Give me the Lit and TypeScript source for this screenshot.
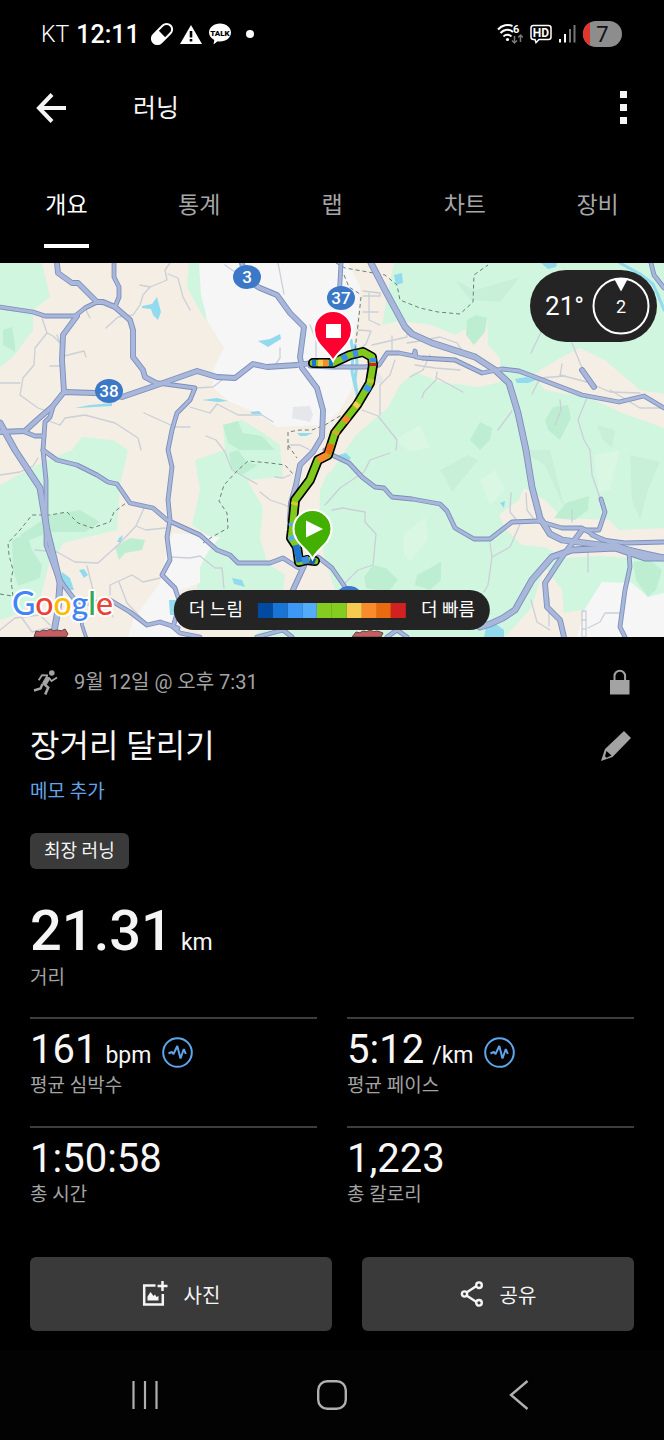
import { LitElement, html, svg, css } from "lit";
import { customElement, property, state } from "lit/decorators.js";

type Shape = [kind: string, points: string];
type Stroke = [width: number, points: string];

const AREAS: Shape[] = [
  ["green", "0,263 42,263 50,297 33,310 33,330 13,357 0,367"],
  ["green", "189,263 187,287 205,320 210,300 201,263"],
  ["white", "199,263 201,295 208,322 224,348 213,370 213,388 230,402 257,413 277,427 325,425 340,410 352,390 354,340 362,290 348,263"],
  ["green", "0,485 43,462 72,450 82,437 113,440 128,450 120,485 117,530 63,543 60,550 50,560 40,600 10,617 0,620"],
  ["green", "195,460 225,450 223,425 242,420 262,432 280,445 283,477 247,480 263,507 260,537 267,563 285,575 283,590 197,590 200,565 215,540 192,525 200,490"],
  ["green", "393,263 664,263 664,637 330,637 250,637 335,590 325,560 319,530 320,490 335,455 350,430 378,417 366,400 380,372 372,340 382,325"],
  ["white", "173,533 220,537 207,553 200,567 200,583 180,590 180,637 128,637 133,620 160,583 167,550"],
  ["beige", "362,263 394,263 381,325 400,321 432,325 455,335 487,318 488,345 500,358 500,382 480,387 440,382 415,372 400,385 388,408 378,416 356,435 332,470 300,500 352,390"],
  ["beige", "533,375 560,358 580,348 605,360 640,390 664,394 664,428 620,412 590,398 545,390"],
  ["beige", "499,515 519,500 524,488 545,500 562,518 609,520 619,530 664,528 664,560 600,556 565,558 545,547 522,545 505,528"],
  ["beige", "545,567 562,590 564,613 582,610 582,637 505,637 532,607 539,583"],
  ["white", "602,582 632,583 648,597 664,593 664,637 577,637 584,610"],
  ["wood", "3,330 12,327 15,345 15,352 3,345"],
  ["wood", "223,425 238,421 243,433 262,436 275,450 240,450 228,443"],
  ["wood", "467,320 476,315 487,318 485,332 474,345 466,335"],
  ["wood", "115,547 130,538 145,540 142,550 125,553 119,560"],
  ["wood", "12,540 27,534 32,550 42,565 40,578 18,586 13,570"],
  ["wood", "20,535 50,515 80,510 100,522 85,532 50,532 30,540"],
  ["wood", "229,453 238,450 247,462 258,465 242,475 231,468"],
  ["wood", "364,577 373,565 386,568 398,580 388,592 366,588"],
  ["wood", "417,575 432,567 441,562 441,580 430,590 415,585"],
  ["wood", "554,518 566,503 589,496 588,510 575,520"],
  ["wood", "633,562 650,560 662,570 656,590 648,597 636,580"],
  ["wood", "545,420 553,407 568,405 571,418 560,440 548,430"],
  ["wood", "470,440 480,422 492,428 490,440 480,450"],
  ["shade", "440,470 468,455 478,460 452,492 446,480"],
  ["shade", "455,280 475,290 520,277 500,302 470,300"],
  ["shade", "597,425 615,430 612,448 603,440"],
  ["shade", "630,455 660,462 648,490 640,520 632,500"],
  ["shade", "565,510 550,450 520,450 545,465"],
  ["pale", "403,535 425,517 428,540 410,562 404,555"],
  ["pale", "594,455 620,450 610,490 599,492"],
  ["pale", "480,480 495,470 505,490 490,505"],
  ["pale", "395,440 420,425 430,447 410,452"],
  ["grey", "293,407 310,406 313,415 310,422 292,418"],
  ["grey", "378,372 383,378 382,384 375,382"],
  ["water", "142,306 152,304 157,297 161,312 158,320 153,315 151,309 142,308"],
  ["water", "258,341 270,339 280,334 281,339 268,347"],
  ["water", "75,408 90,405 112,403 112,406 78,408"],
  ["water", "202,400 217,398 228,401 218,402"],
  ["water", "250,412 259,411 262,414 252,414"],
  ["water", "297,433 313,433 306,436 300,436"],
  ["water", "394,275 402,273 403,283 396,285"],
  ["water", "515,379 526,377 536,380 528,383 517,383"],
  ["water", "62,572 70,578 74,590 68,590 60,582"],
  ["water", "79,570 84,569 88,575 84,578"],
  ["water", "169,600 176,600 176,615 170,615"],
  ["water", "232,578 242,580 245,587 234,584"],
  ["water", "338,455 346,453 351,458 346,463 340,461"],
  ["water", "500,503 505,501 504,508"],
  ["water", "486,627 496,624 504,630 504,637 484,637"],
  ["water", "541,263 557,263 556,267 548,269"],
  ["water", "119,538 123,535 121,542 117,542"],
];

const STREAMS = [
  "620,263 640,274 653,284 658,295 664,310",
  "351,340 353,352 352,372 356,390",
  "355,345 357,362 355,380 358,400",
];

const MINOR = [
  "42,318 47,333 35,348 34,365 23,378 20,395 38,408 50,412",
  "47,333 53,336 60,343 57,335",
  "64,356 84,351 86,357",
  "50,366 62,366",
  "0,383 20,383",
  "85,308 90,318",
  "106,328 118,317 133,315 140,305 143,295 150,287 167,280 165,270 170,263",
  "168,274 178,278 183,297 190,310",
  "140,285 150,287",
  "225,265 242,277",
  "278,263 284,294",
  "280,348 280,358 275,365",
  "144,413 175,427 190,427",
  "46,420 60,425 65,418 85,415 115,423 138,438 141,450",
  "190,407 210,413 217,404 238,415 262,415 273,422",
  "195,388 213,387 222,380",
  "206,436 216,440 225,452 232,470 257,484",
  "0,475 20,472 33,466 38,458",
  "144,508 136,526 118,545 98,563 75,562 57,552 35,550",
  "136,526 146,530 165,528",
  "170,557 190,558 200,556 215,568 222,568 224,588",
  "87,566 93,590 92,603",
  "110,595 110,585 132,575 143,582 160,578",
  "119,582 127,603 145,622",
  "260,492 270,500 285,505 291,508",
  "310,325 316,340 316,360",
  "332,510 343,508 365,512 365,522 376,534 373,565 358,570 345,583",
  "325,505 340,488 352,480 364,472 370,460 390,453",
  "363,291 380,293 380,296 363,296",
  "369,293 369,320 380,325",
  "358,330 371,331 366,344 358,350",
  "363,312 378,312",
  "372,345 407,337 407,325",
  "392,336 392,350",
  "407,343 420,341 440,337 457,343 463,352",
  "430,355 423,370 410,377",
  "437,372 436,380 424,392 422,398",
  "437,378 463,392",
  "395,360 390,375 380,385 380,415",
  "362,410 378,416 397,440 396,450",
  "415,365 435,368 460,370",
  "531,353 542,330",
  "572,343 580,363 588,380",
  "560,375 587,382 610,392 640,393",
  "562,364 560,376",
  "532,394 540,378 565,376",
  "610,390 640,408 664,408",
  "588,395 578,420 584,440 590,450",
  "560,400 561,410 555,425",
  "512,411 498,430",
  "590,450 592,475 600,498",
  "526,493 527,510 533,518",
  "511,493 510,512 520,524 510,547 492,557 488,585 484,592",
  "490,543 492,557",
  "572,510 572,522",
  "588,550 588,572",
  "531,600 537,622 550,630",
  "549,598 549,626",
  "582,611 586,611 586,637 582,637 582,611",
  "582,620 586,620",
  "582,629 586,629",
  "588,628 600,622 605,613 620,613",
  "0,630 15,618 40,615 50,625",
  "22,618 32,632 48,628",
  "90,603 110,609 113,617",
  "290,475 283,478 275,477",
  "290,445 300,445 310,450",
];

const DASHED = [
  "13,596 11,580 13,570 9,555 8,543 20,530 32,515 50,515 67,512 78,523 92,528 110,522 114,512 130,500",
  "0,594 12,596",
  "203,543 212,537 228,528 227,513 219,501 224,485 238,470 248,461 270,463 285,465 293,474",
  "336,263 345,268 368,272 385,275 397,285 400,300 420,308 438,312 460,314 473,302 474,275 488,265",
  "344,275 349,287 360,294",
  "361,297 358,325 355,350",
  "288,450 288,432 300,430 312,430 325,425 340,416 352,413",
  "288,445 297,458",
];

const ROADS: Stroke[] = [
  [4, "57,263 58,273 72,283 78,283 97,302 103,302 115,307 130,320 133,330 133,357 143,370 145,377 158,384"],
  [3, "114,263 114,277 119,287 119,297 115,307"],
  [3, "0,307 33,312 45,316 75,316 85,308 97,302"],
  [4, "77,316 63,335 62,360 64,392"],
  [4, "0,432 25,431 37,420 52,407 64,392 95,393 122,397 163,383 197,371 217,377 235,378 253,364 267,367 297,365 312,363"],
  [3, "158,383 195,388 190,400 177,413 172,430 168,450 172,467 168,500 170,520 167,537 170,560 162,575 175,588 180,603 173,627 180,633 200,637"],
  [4, "242,263 246,280 260,288 277,295 290,313 304,327 300,357 302,368 317,388 323,410 322,437 313,452 300,465 296,485 291,503 290,520"],
  [5, "0,423 15,450 40,488 47,530 60,583 58,610 53,637"],
  [3, "53,407 50,417 45,422 43,450 46,480 46,505 46,545 57,575 65,587 75,600 85,604 110,600 130,612 147,625 160,622 178,628"],
  [3, "25,432 35,436 44,436"],
  [3, "43,450 57,460 77,465 97,475 108,482 117,484 130,503 153,508 167,520 200,535 217,550 230,555 238,563 270,563 283,558 297,567 302,569"],
  [4, "304,566 292,592"],
  [3, "318,557 332,568 345,587"],
  [3, "325,450 332,455 349,463 362,477 375,487 384,488 392,497 412,499 440,504 447,511 455,528 474,539 490,539 512,522 538,521"],
  [3, "310,366 332,367 365,367 379,365 387,353 399,353 414,356 415,351 416,357 422,358 455,360 482,373 502,369 519,371 582,395 619,402 644,396 664,408"],
  [5, "371,263 385,290 405,327 412,334 432,343 475,357 495,370 509,383 518,413 526,450 532,487 540,518 550,534 562,540 609,546 664,558"],
  [4, "582,370 594,387"],
  [3, "538,521 562,528 582,528 602,540 625,543 664,542"],
  [3, "601,499 605,512 599,530 585,530"],
  [5, "480,627 490,624 503,618 515,610 532,580 552,557 572,550 615,548 645,558 664,558"],
  [3, "592,535 625,548 655,556"],
  [4, "582,530 562,557 545,583 547,607 560,620 564,637"],
  [3, "629,553 630,567 625,590 620,627 625,637"],
  [3, "651,263 654,275 664,288"],
  [3, "257,637 283,630 292,637"],
  [3, "387,637 397,630 407,637"],
  [3, "341,263 339,300"],
  [2, "81,612 82,625 86,637"],
];

const ROUTE =
  "313,363 333,363 350,355 363,352 372,357 373,365 370,383 357,405 335,433 328,455 318,460 310,480 295,500 292,530 291,538 297,547 299,562 307,560 315,561";

const PACE: [color: string, points: string][] = [
  ["#1a74d4", "312,363 316,363"],
  ["#f7cb50", "318,363 323,363"],
  ["#f98b2c", "323,363 328,363"],
  ["#1a74d4", "329,363 333,363"],
  ["#3c8ee8", "342,359 347,356"],
  ["#3c8ee8", "353,354 358,353"],
  ["#3c8ee8", "373,358 373,362"],
  ["#d32020", "373,363 373,366"],
  ["#b9c92c", "371,379 370,383"],
  ["#3c98f4", "369,386 366,391"],
  ["#f7cb50", "358,403 355,407"],
  ["#f98b2c", "348,417 344,422"],
  ["#d9a92c", "337,431 335,434"],
  ["#ea6a10", "331,444 328,454"],
  ["#f98b2c", "328,455 318,460"],
  ["#d9c92c", "295,502 294,505"],
  ["#54abfc", "292,523 292,526"],
  ["#54abfc", "291,536 293,540"],
  ["#1a74d4", "296,545 299,558 300,562"],
  ["#3c8ee8", "302,561 309,559"],
  ["#1a5aa8", "310,560 315,562"],
];

const LEGEND = [
  "#014aa0", "#1a74d4", "#3c98f4", "#54abfc", "#84cc20",
  "#84cc20", "#f7cb50", "#f98b2c", "#ea6a10", "#d32020",
];

@customElement("route-map")
class RouteMap extends LitElement {
  static styles = css`
    :host { display: block; position: relative; height: 374px; overflow: hidden; }
    .canvas { display: block; width: 100%; height: 100%; }
    .green { fill: #d1f6e0; }
    .wood { fill: #beeed1; }
    .shade { fill: #c8f0d8; }
    .pale { fill: #daf7e3; }
    .white { fill: #f6f6f7; }
    .beige { fill: #f4eee4; }
    .grey { fill: #e6e7ea; }
    .water { fill: #92dbee; }
    .line { fill: none; stroke-linejoin: round; stroke-linecap: round; }
    .stream { stroke: #92dbee; stroke-width: 3; }
    .minor { stroke: #cbcfd8; stroke-width: 1.3; }
    .dashed { stroke: #6d7f78; stroke-width: 1; stroke-dasharray: 4 3; stroke-linecap: butt; }
    .casing { stroke: #7c8fbd; }
    .road { stroke: #a8b7da; }
    .butt { stroke-linecap: butt; }
    .shield { font: 500 17px Roboto, sans-serif; fill: #fff; text-anchor: middle; }
    .logo {
      font: 500 32px Lato, sans-serif; stroke: #fff; stroke-width: 4;
      stroke-linejoin: round; paint-order: stroke;
    }
    .b { fill: #4285f4; }
    .r { fill: #ea4335; }
    .y { fill: #fbbc05; }
    .g { fill: #34a853; }
    .weather {
      position: absolute; top: 7px; right: 7px; height: 72px; box-sizing: border-box;
      padding: 0 7px 0 15px; display: flex; align-items: center; gap: 8px;
      border-radius: 36px; background: #242424; color: #fff; font-size: 26px;
    }
    .dial { display: block; width: 58px; height: 58px; }
    .dial-text { font: 400 18px Roboto, sans-serif; fill: #fff; text-anchor: middle; }
    .legend {
      position: absolute; left: 50%; bottom: 7px; transform: translateX(-50%);
      height: 40px; box-sizing: border-box; padding: 0 15px; display: flex;
      align-items: center; gap: 15px; border-radius: 20px; background: #242424;
      color: #fff; font-size: 18px; line-height: 40px; white-space: nowrap;
    }
    .scale { display: flex; width: 148px; height: 15px; }
    .step { flex: 1; }
  `;

  render() {
    return html`
      <svg class="canvas" viewBox="0 263 664 374" preserveAspectRatio="xMidYMid slice" role="img" aria-label="지도">
        <rect class="beige" y="263" width="664" height="374"></rect>
        ${AREAS.map(([kind, points]) => svg`<polygon class=${kind} points=${points}></polygon>`)}
        ${STREAMS.map((p) => svg`<polyline class="line stream" points=${p}></polyline>`)}
        ${MINOR.map((p) => svg`<polyline class="line minor" points=${p}></polyline>`)}
        ${DASHED.map((p) => svg`<polyline class="line dashed" points=${p}></polyline>`)}
        ${ROADS.map(([w, p]) => svg`<polyline class="line casing" stroke-width=${w + 1.8} points=${p}></polyline>`)}
        ${ROADS.map(([w, p]) => svg`<polyline class="line road" stroke-width=${w} points=${p}></polyline>`)}
        <ellipse cx="247" cy="277" rx="14" ry="12" fill="#3b78c8"></ellipse>
        <text class="shield" x="247" y="283">3</text>
        <ellipse cx="341" cy="298" rx="14" ry="12" fill="#3b78c8"></ellipse>
        <text class="shield" x="341" y="304">37</text>
        <ellipse cx="109" cy="391" rx="14" ry="12" fill="#3b78c8"></ellipse>
        <text class="shield" x="109" y="397">38</text>
        <ellipse cx="349" cy="597" rx="13" ry="11" fill="#3b78c8"></ellipse>
        <path d="M34 637l2-6q4 2 7-1 4 2 7-1 4 3 7 1 5 2 8-1l3 5-2 3z" fill="#c65d60" stroke="#5d4444"></path>
        <path d="M352 637l4-5q4 2 7-1 4 2 7-1 4 3 7 1 4 1 6 2l-2 4z" fill="#c65d60" stroke="#5d4444"></path>
        <polyline class="line" stroke="#000" stroke-width="10" points=${ROUTE}></polyline>
        <polyline class="line" stroke="#82c91e" stroke-width="6.6" points=${ROUTE}></polyline>
        ${PACE.map(([c, p]) => svg`<polyline class="line butt" stroke=${c} stroke-width="6.6" points=${p}></polyline>`)}
        <path d="M333 361C328 351 314 344 314 330a19 19 0 0 1 38 0C352 344 338 351 333 361z" fill="#ff0030" stroke="#fff" stroke-width="2"></path>
        <rect x="326" y="324" width="15" height="14" fill="#fff"></rect>
        <path d="M312.500 559C308 549 293.500 543 293.500 529a19 19 0 0 1 38 0C331.500 543 317 549 312.500 559z" fill="#43b000" stroke="#fff" stroke-width="2"></path>
        <path d="M306 520.500v17l17-8.500z" fill="#fff"></path>
        <text class="logo" x="12" y="615"><tspan class="b">G</tspan><tspan class="r">o</tspan><tspan class="y">o</tspan><tspan class="b">g</tspan><tspan class="g">l</tspan><tspan class="r">e</tspan></text>
      </svg>
      <div class="weather">
        <span>21°</span>
        <svg class="dial" viewBox="0 0 58 58">
          <circle cx="29" cy="29" r="27.500" fill="none" stroke="#fff" stroke-width="2"></circle>
          <path d="M22 1.500h14l-7 13z" fill="#fff"></path>
          <text class="dial-text" x="29" y="36">2</text>
        </svg>
      </div>
      <div class="legend">
        <span>더 느림</span>
        <div class="scale">${LEGEND.map((c) => html`<div class="step" style="background:${c}"></div>`)}</div>
        <span>더 빠름</span>
      </div>
    `;
  }
}

@customElement("metric-cell")
class MetricCell extends LitElement {
  @property() value = "";
  @property() unit = "";
  @property() label = "";
  @property({ type: Boolean }) pulse = false;

  static styles = css`
    :host { display: block; border-top: 2px solid #3d3d3d; padding-top: 8px; }
    .row { display: flex; align-items: baseline; height: 46px; line-height: 46px; color: #f7f7f7; }
    .value { font-size: 40px; }
    .unit { font-size: 23px; margin-left: 8px; }
    .more {
      align-self: flex-end; margin: 0 0 5px 11px; padding: 0; border: 0;
      background: none; width: 31px; height: 31px;
    }
    .icon { display: block; width: 31px; height: 31px; }
    .label { font-size: 19px; line-height: 26px; color: #a3a3a3; }
  `;

  render() {
    return html`
      <div class="row">
        <span class="value">${this.value}</span>
        ${this.unit ? html`<span class="unit">${this.unit}</span>` : ""}
        ${this.pulse
          ? html`<button class="more" aria-label=${this.label}>
              <svg class="icon" viewBox="0 0 31 31" fill="none" stroke="#5fa5ec">
                <circle cx="15.500" cy="15.500" r="14.300" stroke-width="2"></circle>
                <path d="M6.500 16.500l3.200-1.500 1.800 2L15.300 9l3.200 12.500L21.800 12l2 5" stroke-width="2" stroke-linejoin="bevel"></path>
              </svg>
            </button>`
          : ""}
      </div>
      <div class="label">${this.label}</div>
    `;
  }
}

@customElement("app-root")
class AppRoot extends LitElement {
  @state() private tab = "개요";

  static styles = css`
    :host {
      display: flex; flex-direction: column; min-height: 100vh; background: #000; color: #f5f5f5;
      font-family: Roboto, "Noto Sans CJK KR", sans-serif;
    }
    button { font-family: inherit; color: inherit; background: none; border: 0; padding: 0; }
    svg { display: block; }
    .status {
      display: flex; align-items: center; justify-content: space-between;
      height: 68px; padding: 0 42px 0 41px; color: #fff;
    }
    .side { display: flex; align-items: center; gap: 7px; }
    .carrier { font-size: 23px; font-weight: 300; }
    .clock { font-size: 25px; font-weight: 500; margin-right: 4px; }
    .tiny { font: 900 8px Roboto, sans-serif; text-anchor: middle; }
    .hd { font: 700 12px Roboto, sans-serif; text-anchor: middle; fill: #fff; }
    .six { font: 700 11px Roboto, sans-serif; fill: #fff; }
    .charge { font: 400 22px Roboto, sans-serif; text-anchor: middle; fill: #111; }
    .bar { display: flex; align-items: center; height: 80px; padding: 0 36px; }
    .heading { flex: 1; margin: 0 0 0 67px; padding-top: 2px; font-size: 25px; font-weight: 400; line-height: 36px; }
    .tabs { display: grid; grid-template-columns: repeat(5, 1fr); height: 115px; }
    .tab {
      display: flex; flex-direction: column; align-items: center; padding-top: 40px;
      font-size: 23px; line-height: 36px; color: #a6a6a6;
    }
    .tab::after { content: ""; width: 45px; height: 4px; margin-top: 20px; }
    .tab.on { color: #fff; }
    .tab.on::after { background: #fff; }
    .details { padding: 32px 30px 0; }
    .meta { display: flex; align-items: center; height: 26px; color: #a3a3a3; }
    .when { flex: 1; margin-left: 14px; font-size: 20px; line-height: 26px; }
    .named { display: flex; align-items: center; justify-content: space-between; margin-top: 28px; }
    .title { margin: 0; font-size: 32px; font-weight: 400; line-height: 46px; color: #f7f7f7; }
    .memo { display: block; margin-top: 10px; font-size: 19px; line-height: 26px; color: #62a5ea; text-decoration: none; }
    .chip {
      width: fit-content; margin-top: 28px; padding: 0 14px; border-radius: 6px;
      background: #3a3a3a; font-size: 18px; line-height: 36px;
    }
    .distance { margin-top: 32px; height: 60px; line-height: 60px; }
    .big { font-size: 56px; font-weight: 500; }
    .unit { font-size: 23px; margin-left: 8px; }
    .label { margin-top: 4px; font-size: 19px; line-height: 26px; color: #a3a3a3; }
    .metrics { display: grid; grid-template-columns: 1fr 1fr; gap: 27px 30px; margin-top: 26px; }
    .actions { display: grid; grid-template-columns: 50% 1fr; gap: 30px; margin-top: 49px; }
    .action {
      display: flex; align-items: center; justify-content: center; gap: 16px; height: 74px;
      border-radius: 6px; background: #3a3a3a; font-size: 20px;
    }
    .system {
      display: grid; grid-template-columns: repeat(3, 1fr); place-items: center;
      height: 90px; margin-top: auto; padding: 0 52px; background: #030303;
    }
  `;

  render() {
    return html`
      <div class="status">
        <div class="side">
          <span class="carrier">KT</span>
          <span class="clock">12:11</span>
          <svg width="22" height="24" viewBox="0 0 22 24">
            <g transform="rotate(-45 11 12)">
              <rect x="-1" y="6.500" width="24" height="11" rx="5.500" fill="none" stroke="#fff" stroke-width="2"></rect>
              <path d="M11 6.500H4.500a5.500 5.500 0 0 0 0 11H11z" fill="#fff"></path>
            </g>
          </svg>
          <svg width="22" height="22" viewBox="0 0 22 22">
            <path d="M11 2L22 21H0z" fill="#fff"></path>
            <path d="M9.700 8h2.600v6.500H9.700zM9.700 16h2.600v2.600H9.700z" fill="#000"></path>
          </svg>
          <svg width="22" height="24" viewBox="0 0 22 24">
            <path d="M11 1.500c6.200 0 11 4 11 9s-4.800 9-11 9q-1.200 0-2.400-.2L4.500 22.500l.8-4.500C2 16.400 0 13.700 0 10.500c0-5 4.800-9 11-9z" fill="#fff"></path>
            <text class="tiny" x="11" y="13.500">TALK</text>
          </svg>
          <svg width="24" height="8" viewBox="0 0 24 8"><circle cx="12" cy="4" r="4" fill="#fff"></circle></svg>
        </div>
        <div class="side">
          <svg width="26" height="24" viewBox="0 0 26 24" fill="none">
            <g stroke="#fff" stroke-width="2">
              <path d="M1 7.500C5 3 11 2 15.500 4"></path>
              <path d="M3.500 11c3.500-4 9-4.500 12.500-1"></path>
              <path d="M6.500 14.500c2-2.500 6-2.500 8 0"></path>
            </g>
            <circle cx="10.500" cy="17.500" r="1.600" fill="#fff"></circle>
            <text class="six" x="16" y="11">6</text>
            <path d="M17.500 14v7m-2.500-2.500 2.500 2.500 2.500-2.500M23.500 20v-7M21.200 15.500l2.300-2.500 2.300 2.500" stroke="#777" stroke-width="1.500"></path>
          </svg>
          <svg width="22" height="20" viewBox="0 0 22 20">
            <path d="M3.500 1.500h15q2.500 0 2.500 2.500v9q0 2.500-2.500 2.500H9L6 18.500l-1-3H3.500Q1 15.500 1 13V4q0-2.500 2.500-2.500z" fill="none" stroke="#fff" stroke-width="1.500"></path>
            <text class="hd" x="11" y="13">HD</text>
          </svg>
          <svg width="17" height="18" viewBox="0 0 17 18">
            <rect y="14" width="2" height="3.500" fill="#fff"></rect>
            <rect x="5" y="9" width="2" height="8.500" fill="#fff"></rect>
            <rect x="10" y="4" width="2" height="13.500" fill="#777"></rect>
            <rect x="14.500" y="0" width="2" height="17.500" fill="#777"></rect>
          </svg>
          <svg width="39" height="26" viewBox="0 0 39 26">
            <rect width="39" height="26" rx="13" fill="#8d8d8d"></rect>
            <path d="M7 1.500a13 13 0 0 0 0 23z" fill="#e3352c"></path>
            <text class="charge" x="19.500" y="21">7</text>
          </svg>
        </div>
      </div>

      <header class="bar">
        <button aria-label="뒤로">
          <svg width="30" height="30" viewBox="0 0 30 30" fill="none" stroke="#f5f5f5" stroke-width="4">
            <path d="M30 15H4M16 1.500L3 15l13 13.500"></path>
          </svg>
        </button>
        <h1 class="heading">러닝</h1>
        <button aria-label="메뉴">
          <svg width="8" height="34" viewBox="0 0 8 34" fill="#f5f5f5">
            <path d="M0 0h7v7H0zM0 13h7v7H0zM0 26h7v7H0z"></path>
          </svg>
        </button>
      </header>

      <div class="tabs" role="tablist">
        ${["개요", "통계", "랩", "차트", "장비"].map(
          (name) => html`<button
            class=${this.tab === name ? "tab on" : "tab"}
            role="tab"
            aria-selected=${this.tab === name ? "true" : "false"}
            @click=${() => (this.tab = name)}
          >${name}</button>`
        )}
      </div>

      <route-map></route-map>

      <main class="details">
        <div class="meta">
          <svg width="30" height="26" viewBox="0 0 30 26" fill="none" stroke="#a3a3a3">
            <circle cx="21.800" cy="4" r="2.800" fill="#a3a3a3" stroke="none"></circle>
            <path d="M18.500 8l-4.500 7.500" stroke-width="5"></path>
            <path d="M18 6.500l-6-.3-3.300 5" stroke-width="1.800"></path>
            <path d="M18.500 8.500l3 3.500 5.500-3.500" stroke-width="1.800"></path>
            <path d="M13.500 14.500l4.700 4-3 7" stroke-width="2.600"></path>
            <path d="M12.500 15l-2 4.500-6.500 2" stroke-width="2.400"></path>
          </svg>
          <span class="when">9월 12일 @ 오후 7:31</span>
          <svg width="24" height="26" viewBox="0 0 24 26">
            <path d="M0 11h19.500v14.500H0z" fill="#a3a3a3"></path>
            <path d="M4.500 12V7a5.300 5.300 0 0 1 10.600 0v5" fill="none" stroke="#a3a3a3" stroke-width="2"></path>
          </svg>
        </div>
        <div class="named">
          <h2 class="title">장거리 달리기</h2>
          <button aria-label="편집">
            <svg width="33" height="30" viewBox="0 0 33 30">
              <path d="M23 0l7 7L11.500 26 0 30l4-12z" fill="#a3a3a3"></path>
              <path d="M5.500 20l5 4.500-5 2.200-1.500-1.500z" fill="#000"></path>
            </svg>
          </button>
        </div>
        <a class="memo" href="#memo">메모 추가</a>
        <div class="chip">최장 러닝</div>
        <div class="distance"><span class="big">21.31</span><span class="unit">km</span></div>
        <div class="label">거리</div>

        <div class="metrics">
          <metric-cell value="161" unit="bpm" label="평균 심박수" pulse></metric-cell>
          <metric-cell value="5:12" unit="/km" label="평균 페이스" pulse></metric-cell>
          <metric-cell value="1:50:58" label="총 시간"></metric-cell>
          <metric-cell value="1,223" label="총 칼로리"></metric-cell>
        </div>

        <div class="actions">
          <button class="action">
            <svg width="26" height="26" viewBox="0 0 26 26" fill="none" stroke="#f5f5f5">
              <path d="M13.500 4.500H2.200v19h18.600V13" stroke-width="2.500"></path>
              <path d="M20.500 0v10M15.500 5h10" stroke-width="2.500"></path>
              <path d="M5.500 19.500v-4l3-4.500 3 4 1.500-1.500 1.500 2.500 2-1v4.500z" fill="#f5f5f5" stroke="none"></path>
            </svg>
            사진
          </button>
          <button class="action">
            <svg width="24" height="26" viewBox="0 0 24 26" fill="none" stroke="#f5f5f5" stroke-width="2.400">
              <path d="M6.500 11.500L16.500 5M6.500 14.500L16.500 21"></path>
              <circle cx="4.500" cy="13" r="2.600"></circle>
              <circle cx="19" cy="4.200" r="2.800"></circle>
              <circle cx="19" cy="21.800" r="2.800"></circle>
            </svg>
            공유
          </button>
        </div>
      </main>

      <nav class="system">
        <button aria-label="최근 앱">
          <svg width="28" height="28" viewBox="0 0 28 28" stroke="#b0b0b0" stroke-width="2.200">
            <path d="M2.500 0v28M14 0v28M25.500 0v28"></path>
          </svg>
        </button>
        <button aria-label="홈">
          <svg width="30" height="30" viewBox="0 0 30 30" fill="none" stroke="#b0b0b0" stroke-width="2.400">
            <rect x="1.200" y="1.200" width="27.600" height="27.600" rx="9"></rect>
          </svg>
        </button>
        <button aria-label="이전">
          <svg width="20" height="30" viewBox="0 0 20 30" fill="none" stroke="#b0b0b0" stroke-width="2.400">
            <path d="M18.500 1L2 15l16.500 14"></path>
          </svg>
        </button>
      </nav>
    `;
  }
}
